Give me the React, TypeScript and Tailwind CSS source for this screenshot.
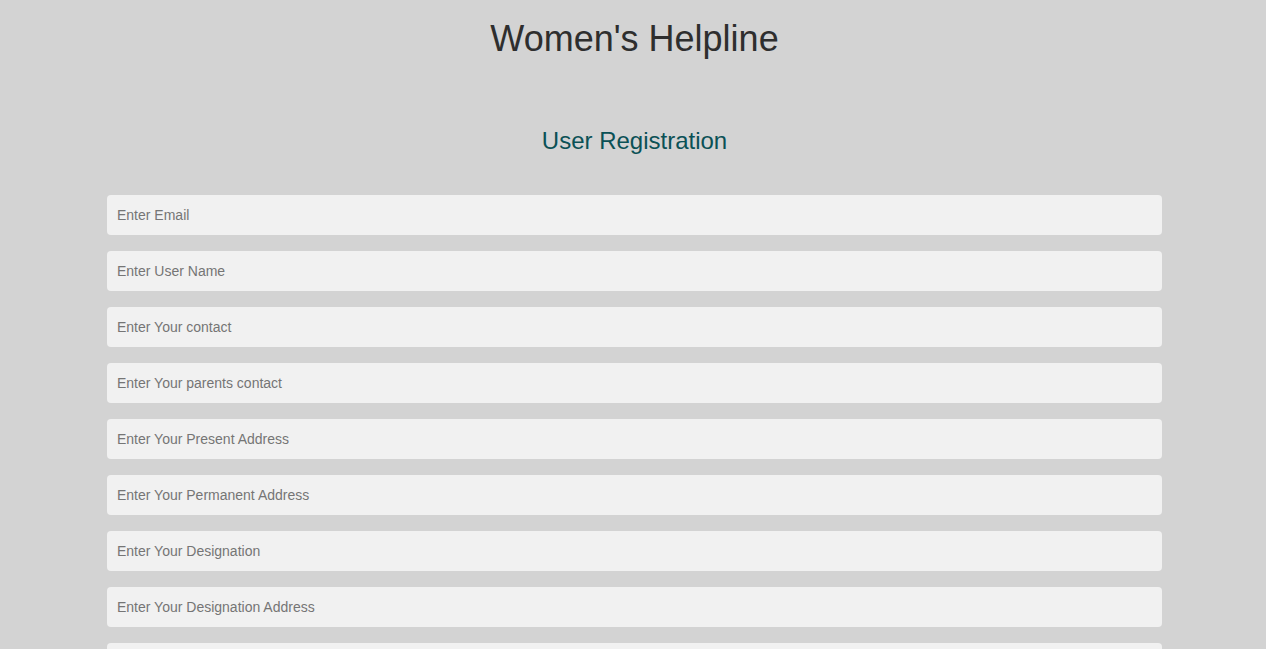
import { useState } from "react";

const fields = [
    { name: "email", type: "email", placeholder: "Enter Email" },
    { name: "username", type: "text", placeholder: "Enter User Name" },
    { name: "contact", type: "text", placeholder: "Enter Your contact" },
    { name: "parentsContact", type: "text", placeholder: "Enter Your parents contact" },
    { name: "presentAddress", type: "text", placeholder: "Enter Your Present Address" },
    { name: "permanentAddress", type: "text", placeholder: "Enter Your Permanent Address" },
    { name: "designation", type: "text", placeholder: "Enter Your Designation" },
    { name: "designationAddress", type: "text", placeholder: "Enter Your Designation Address" },
    { name: "password", type: "password", placeholder: "" },
];

export default function App() {
    const [values, setValues] = useState<Record<string, string>>({});

    return (
        <div className="h-[649px] overflow-hidden bg-[#d3d3d3] font-['Liberation_Sans',Arial,sans-serif]">
            {/* Header */}
            <h1 className="pt-[18px] pl-[3px] text-center text-[36px] leading-[41px] text-[#2e2e2e]">
                Women's Helpline
            </h1>

            {/* Form */}
            <h2 className="mt-[68px] pl-[3px] text-center text-[24px] leading-[28px] text-[#0b5156]">
                User Registration
            </h2>

            <form className="ml-[107px] mt-[40px] flex w-[1055px] flex-col gap-4" onSubmit={(e) => e.preventDefault()}>
                {fields.map((f) => (
                    <input
                        key={f.name}
                        type={f.type}
                        name={f.name}
                        placeholder={f.placeholder}
                        value={values[f.name] ?? ""}
                        onChange={(e) => setValues({ ...values, [f.name]: e.target.value })}
                        className="h-10 w-full rounded bg-[#f1f1f1] px-[10px] text-[14px] text-[#333] placeholder:text-[#757575] outline-none"
                    />
                ))}
            </form>
        </div>
    );
}
